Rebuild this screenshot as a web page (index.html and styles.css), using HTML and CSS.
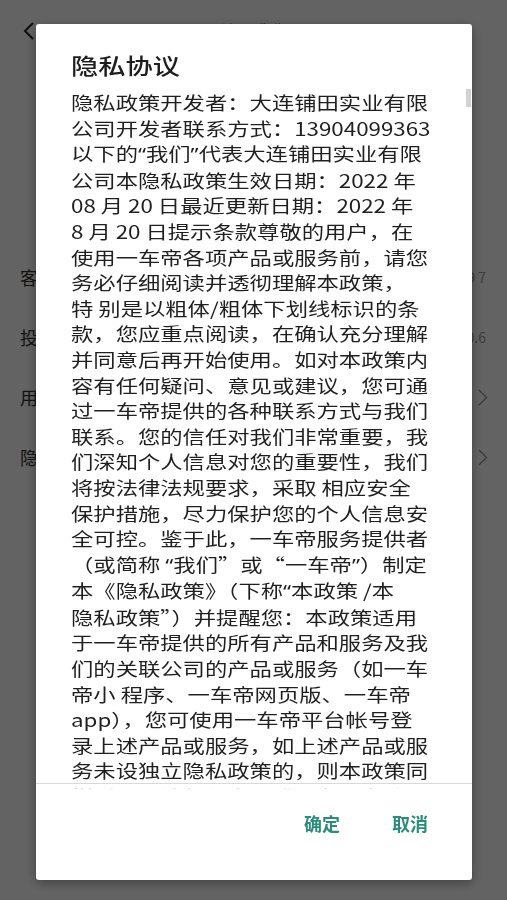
FILE: index.html
```html
<!DOCTYPE html>
<html lang="zh-CN">
<head>
<meta charset="utf-8">
<title>关于我们</title>
<link rel="stylesheet" href="styles.css">
</head>
<body>
<div class="page">
  <header class="topbar">
    <span class="back">
      <svg width="14" height="20" viewBox="0 0 14 20"><path d="M11 2 L3 10 L11 18" fill="none" stroke="#222" stroke-width="2"/></svg>
    </span>
    <span class="page-title">关于我们</span>
    <span></span>
  </header>
  <div class="brand">
    <div class="logo"></div>
    <div class="version">一车帝</div>
  </div>
  <ul class="rows">
    <li class="row"><span class="label">客服电话</span><span class="value">1390409 7</span></li>
    <li class="row"><span class="label">投诉反馈</span><span class="value">V1.0.6</span></li>
    <li class="row"><span class="label">用户协议</span><svg class="chev" width="10" height="17" viewBox="0 0 10 17"><path d="M1 1 L8.5 8.5 L1 16" fill="none" stroke="#999" stroke-width="1.4"/></svg></li>
    <li class="row"><span class="label">隐私政策</span><svg class="chev" width="10" height="17" viewBox="0 0 10 17"><path d="M1 1 L8.5 8.5 L1 16" fill="none" stroke="#999" stroke-width="1.4"/></svg></li>
  </ul>
</div>

<div class="overlay">
  <div class="dialog">
    <h2 class="dlg-title"><span class="stretch">隐私协议</span></h2>
    <div class="scroll">
      <div class="lines">
        <div>隐私政策开发者：大连铺田实业有限</div>
        <div>公司开发者联系方式：13904099363</div>
        <div>以下的<span class="q">“</span>我们<span class="q">”</span>代表大连铺田实业有限</div>
        <div>公司本隐私政策生效日期：2022 年</div>
        <div>08 月 20 日最近更新日期：2022 年</div>
        <div>8 月 20 日提示条款尊敬的用户，在</div>
        <div>使用一车帝各项产品或服务前，请您</div>
        <div>务必仔细阅读并透彻理解本政策，</div>
        <div>特 别是以粗体/粗体下划线标识的条</div>
        <div>款，您应重点阅读，在确认充分理解</div>
        <div>并同意后再开始使用。如对本政策内</div>
        <div>容有任何疑问、意见或建议，您可通</div>
        <div>过一车帝提供的各种联系方式与我们</div>
        <div>联系。您的信任对我们非常重要，我</div>
        <div>们深知个人信息对您的重要性，我们</div>
        <div>将按法律法规要求，采取 相应安全</div>
        <div>保护措施，尽力保护您的个人信息安</div>
        <div>全可控。鉴于此，一车帝服务提供者</div>
        <div>（或简称 <span class="q">“</span>我们”或“一车帝<span class="q">”</span>）制定</div>
        <div>本《隐私政策》（下称<span class="q">“</span>本政策 /本</div>
        <div>隐私政策”）并提醒您：本政策适用</div>
        <div>于一车帝提供的所有产品和服务及我</div>
        <div>们的关联公司的产品或服务（如一车</div>
        <div>帝小 程序、一车帝网页版、一车帝</div>
        <div>app），您可使用一车帝平台帐号登</div>
        <div>录上述产品或服务，如上述产品或服</div>
        <div>务未设独立隐私政策的，则本政策同</div>
        <div>样适用于该部分产品或服务。在使用</div>
      </div>
      <span class="thumb"></span>
      <span class="divider"></span>
      <span class="fade"></span>
    </div>
    <div class="actions">
      <button class="btn" type="button">确定</button>
      <button class="btn" type="button">取消</button>
    </div>
  </div>
</div>
</body>
</html>
```

FILE: styles.css
```css
* { box-sizing: border-box; }

html, body {
  margin: 0;
  padding: 0;
  height: 100%;
}

body {
  background: #ffffff;
  font-family: "Noto Sans CJK SC", "Noto Sans", sans-serif;
  color: #333;
  overflow: hidden;
}

/* ---------- underlying page ---------- */
.page {
  width: 507px;
}

.topbar {
  height: 62px;
  display: grid;
  grid-template-columns: 60px 1fr 60px;
  align-items: center;
}

.back {
  display: flex;
  align-items: center;
  padding-left: 22px;
}

.page-title {
  text-align: center;
  font-size: 18px;
  line-height: 24px;
  color: #111;
}

.brand {
  height: 185px;
  display: flex;
  flex-direction: column;
  align-items: center;
  justify-content: center;
  gap: 10px;
}

.logo {
  width: 70px;
  height: 70px;
  border-radius: 14px;
  background: #2b8c7c;
}

.version {
  font-size: 15px;
  color: #666;
}

.rows {
  list-style: none;
  margin: 0;
  padding: 0;
}

.row {
  height: 60px;
  display: flex;
  align-items: center;
  justify-content: space-between;
  padding: 0 19px 0 20px;
}

.label {
  font-size: 18px;
  color: #333;
}

.value {
  font-size: 14px;
  color: #999;
  margin-right: 2px;
}

.chev {
  display: block;
}

/* ---------- overlay + dialog ---------- */
.overlay {
  position: fixed;
  inset: 0;
  background: rgba(0, 0, 0, 0.61);
  display: flex;
  padding: 24px 35px 20px 36px;
}

.dialog {
  flex: 1;
  background: #fff;
  border-radius: 3px;
  box-shadow: 0 3px 12px rgba(0, 0, 0, 0.35);
  display: flex;
  flex-direction: column;
}

.dlg-title {
  margin: 0;
  padding: 25px 35px 0;
  font-size: 22px;
  line-height: 30px;
  font-weight: 500;
  color: #1e1e1e;
}

.stretch {
  display: inline-block;
  transform: scaleX(1.24);
  transform-origin: left center;
}

.scroll {
  position: relative;
  margin-top: 10px;
  height: 700px;
  overflow: hidden;
  padding: 1px 35px 0;
}

.lines {
  font-size: 18px;
  line-height: 25.6px;
  color: #1f1f1f;
  white-space: nowrap;
  transform: scaleX(1.24);
  transform-origin: left top;
}

.q {
  font-family: "Noto Sans", sans-serif;
}

.thumb {
  position: absolute;
  top: 0;
  right: 1px;
  width: 5px;
  height: 18px;
  background: #d2d2d2;
}

.divider {
  position: absolute;
  left: 0;
  right: 0;
  top: 694px;
  height: 1px;
  background: #d9d9d9;
}

.fade {
  position: absolute;
  left: 0;
  right: 0;
  top: 695px;
  bottom: 0;
  background: rgba(255, 255, 255, 0.7);
}

.actions {
  display: flex;
  justify-content: flex-end;
  gap: 52px;
  padding: 22px 44px 0 0;
}

.btn {
  border: 0;
  background: none;
  padding: 0;
  font-family: inherit;
  font-size: 18px;
  line-height: 24px;
  font-weight: 700;
  color: #2b8c7c;
}
```
